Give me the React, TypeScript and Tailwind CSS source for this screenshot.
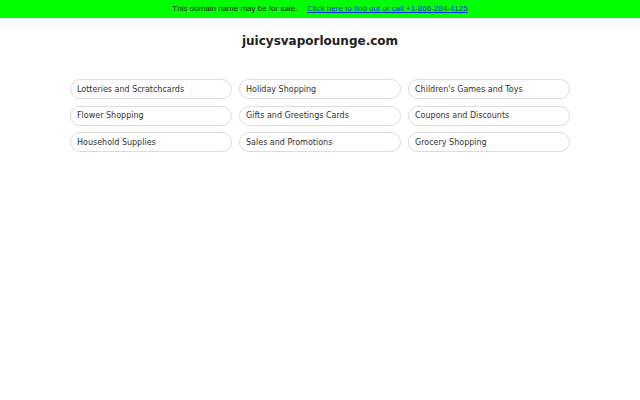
import React from 'react';

const links = [
  'Lotteries and Scratchcards',
  'Holiday Shopping',
  "Children's Games and Toys",
  'Flower Shopping',
  'Gifts and Greetings Cards',
  'Coupons and Discounts',
  'Household Supplies',
  'Sales and Promotions',
  'Grocery Shopping',
];

export default function App() {
  return (
    <div className="min-h-[400px] bg-white font-['DejaVu_Sans',sans-serif]">
      {/* sale banner */}
      <div className="flex h-[20px] items-center justify-center border-b-2 border-[#f3f3f3] bg-[#00ff00] font-['Liberation_Sans',Arial,sans-serif] text-[8px] leading-none text-[#1a1a1a]">
        <span>This domain name may be for sale.</span>
        <a href="#" className="ml-[10px] text-[#0b2bd6] underline">
          Click here to find out or call +1-866-284-4125
        </a>
      </div>

      <h1 className="mt-[13px] text-center text-[12px] font-bold leading-[16px] text-[#222]">
        juicysvaporlounge.com
      </h1>

      <div className="mx-auto mt-[30px] grid w-[500px] grid-cols-3 gap-x-[7px] gap-y-[6.5px]">
        {links.map(label => (
          <a
            key={label}
            href="#"
            className="flex h-[20px] items-center rounded-full border border-[#dcdcdc] px-[6px] pt-px text-[8px] text-[#333]"
          >
            {label}
          </a>
        ))}
      </div>
    </div>
  );
}
